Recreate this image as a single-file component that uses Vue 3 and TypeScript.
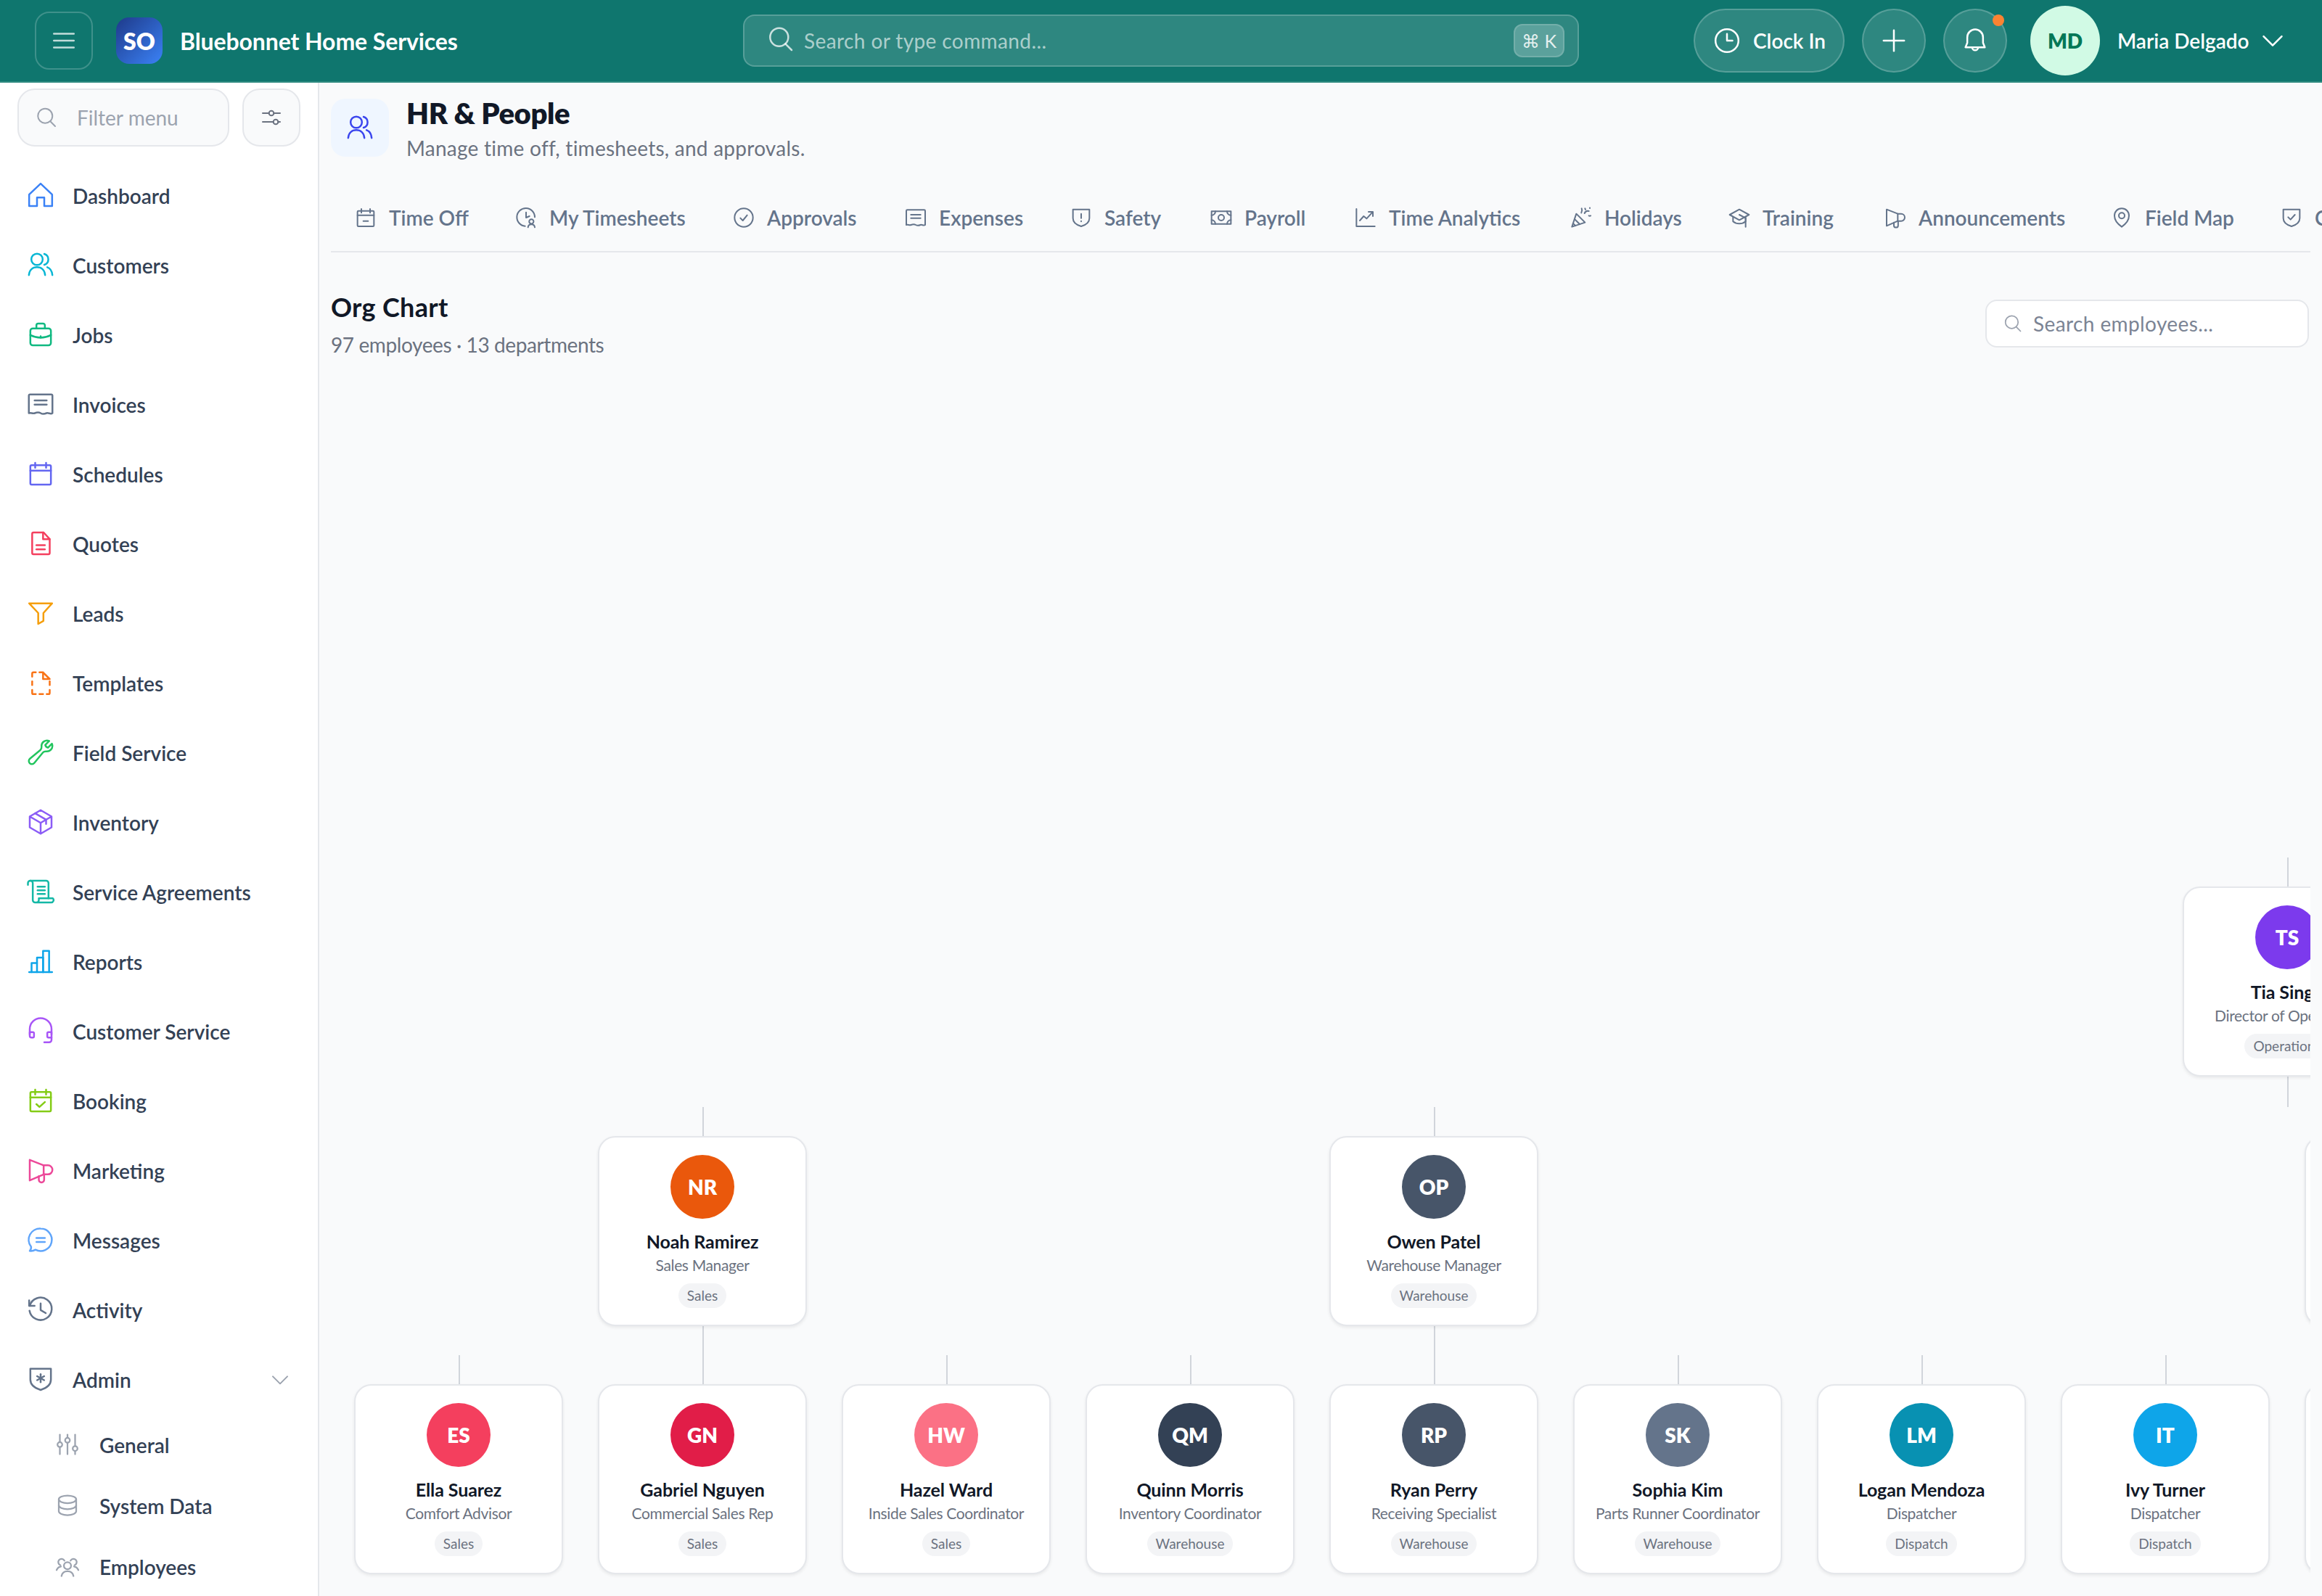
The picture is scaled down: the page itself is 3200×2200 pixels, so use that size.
<script setup lang="ts">
const c = (x: number, y: number, r: number): string =>
  `M${x - r} ${y}a${r} ${r} 0 1 0 ${2 * r} 0a${r} ${r} 0 1 0 ${-2 * r} 0z`

const calBase = ['M3.5 6a1 1 0 0 1 1-1h15a1 1 0 0 1 1 1v14a1 1 0 0 1-1 1h-15a1 1 0 0 1-1-1z', 'M3.5 9.5h17', 'M7.5 3v4', 'M16.5 3v4']
const shieldBase = 'M3.5 3.5h17v9c0 4.3-3.6 7-8.5 8.5-4.9-1.5-8.5-4.2-8.5-8.5z'
const mega = ['M3 3.5 14.5 8H18a3.7 3.7 0 0 1 0 7.5h-3.5L3 20.5z', 'M14.5 8v7.5', 'M10.5 17v3a2.2 2.2 0 0 0 4.4 0v-4.5']

const icons: Record<string, string[]> = {
  menu: ['M3.75 6.25h16.5', 'M3.75 12h16.5', 'M3.75 17.75h16.5'],
  search: ['m21 21-5.2-5.2', 'M15.8 15.8A7.5 7.5 0 1 0 5.2 5.2a7.5 7.5 0 0 0 10.6 10.6z'],
  sliders: ['M3 7.5h6.5', 'M14.5 7.5H21', c(12, 7.5, 2.5), 'M3 16.5h11', 'M19 16.5h2', c(16.5, 16.5, 2.5)],
  home: ['M2.5 11.5 12 2.5l9.5 9v9.5h-6.5v-7H9v7H2.500z'],
  users: [c(9, 7.5, 4.7), 'M2.3 20.5c.4-4.200 3-6.500 6.700-6.500s6.300 2.300 6.700 6.500', 'M15 3a4.700 4.700 0 0 1 0 9', 'M17.500 14c2.500.9 3.900 3.200 4.200 6.500'],
  briefcase: ['M3.500 9a2 2 0 0 1 2-2h13a2 2 0 0 1 2 2v10a2 2 0 0 1-2 2h-13a2 2 0 0 1-2-2z', 'M8.500 7V4.500A1.500 1.500 0 0 1 10 3h4a1.500 1.500 0 0 1 1.500 1.500V7', 'M3.500 12.500c5.300 2.700 11.700 2.700 17 0', 'M12 13.500v1'],
  receipt: ['M2.250 5a1 1 0 0 1 1-1h17.500a1 1 0 0 1 1 1v14.500c-1.600 1.300-3.300-.7-4.900 0s-3.200 1-4.850 0-3.200-.7-4.850 0-3.300-.7-4.900 0z', 'M7 9h10', 'M7 12.500h10'],
  calendar: calBase,
  doc: ['M5 4a1 1 0 0 1 1-1h8.500l5 5.500V20a1 1 0 0 1-1 1H6a1 1 0 0 1-1-1z', 'M14 3v5.500h5.500', 'M8.500 13.500h7', 'M8.500 17h7'],
  funnel: ['M2.500 4h19l-7.200 8v6.500L10 21v-9z'],
  dashdoc: ['M5 7V4.500a1 1 0 0 1 1-1h2', 'M5 11v3', 'M5 18v2.500a1 1 0 0 0 1 1h2', 'M11 21.500h3', 'M17 21.500h1.500a1 1 0 0 0 1-1V18', 'M19.500 14v-3', 'M11 3.500h3l5.500 5.500h-5.500V3.500'],
  wrench: ['M21.750 6.750a4.500 4.500 0 0 1-4.884 4.484c-1.076-.091-2.264.071-2.950.904l-7.152 8.684a2.548 2.548 0 1 1-3.586-3.586l8.684-7.152c.833-.686.995-1.874.904-2.950a4.500 4.500 0 0 1 6.336-4.486l-3.276 3.276a3.004 3.004 0 0 0 2.250 2.250l3.276-3.276c.256.565.398 1.192.398 1.852z'],
  cube: ['m21 7.500-9-5.250L3 7.500m18 0-9 5.250m9-5.250v9l-9 5.250M3 7.500l9 5.250M3 7.500v9l9 5.250m0-9v9', 'M7.500 4.900l9 5.250v3.500'],
  scroll: ['M1.500 6.500V5a2 2 0 0 1 2-2h13a2 2 0 0 1 2 2v12.500', 'M3.500 3a2 2 0 0 1 2 2v14a2 2 0 0 0 2 2h13a2 2 0 0 0 1.500-3.500H10.500V19a2 2 0 0 1-2 2', 'M9.500 8h6', 'M9.500 11h6', 'M9.500 14h6'],
  bars: ['M2.500 21h19', 'M4.500 21v-7.500H9', 'M9 21V9h5v12', 'M14 21V3.500h5V21'],
  headset: ['M3 15v-4.500a9 9 0 0 1 18 0V15', 'M3 13h2.500a1 1 0 0 1 1 1v2.500a1 1 0 0 1-1 1H4.500A1.500 1.500 0 0 1 3 16z', 'M21 13h-2.500a1 1 0 0 0-1 1v2.500a1 1 0 0 0 1 1H21z', 'M21 17.500v2a2 2 0 0 1-2 2h-4'],
  calcheck: [...calBase, 'M8.500 15l2.500 2.300 4.500-4'],
  mega,
  chat: ['M12 2.750a9.250 9.250 0 1 1-4.300 17.450c-1.300.800-2.900 1.200-4.700 1 .9-1 1.300-2.300 1.100-3.500A9.250 9.250 0 0 1 12 2.750z', 'M8.500 10.500h7', 'M8.500 13.800h7'],
  history: ['M2.500 4.500v4.500h4.500', 'M3 9a9.250 9.250 0 1 1-.2 4', 'M12 7v5.500l4.200 2.500'],
  shieldstar: [shieldBase, 'M12 8v6.500', 'M9.100 9.600l5.800 3.300', 'M14.900 9.600l-5.800 3.300'],
  tune: ['M5 3v7', 'M5 14.500V21', c(5, 12.200, 2.200), 'M12 3v3', 'M12 10.500V21', c(12, 8.200, 2.200), 'M19 3v10.500', 'M19 18v3', c(19, 15.800, 2.200)],
  database: ['M12 3c4.400 0 8 1.600 8 3.500S16.400 10 12 10 4 8.400 4 6.500 7.600 3 12 3z', 'M4 6.500v11c0 1.900 3.600 3.500 8 3.500s8-1.600 8-3.500v-11', 'M4 12c0 1.900 3.600 3.500 8 3.500s8-1.600 8-3.500'],
  users3: [c(12, 11.500, 3.300), 'M6.500 21c.5-2.900 2.700-4.500 5.500-4.500s5 1.600 5.500 4.500', 'M9.200 6.800a3 3 0 1 0-3.700 4.200', 'M14.800 6.800a3 3 0 1 1 3.700 4.200', 'M2 15.500c.9-1.900 2.200-3 4-3.200', 'M22 15.500c-.9-1.900-2.200-3-4-3.200'],
  chevron: ['M4.500 8.500 12 16l7.500-7.500'],
  plus: ['M12 3.500v17', 'M3.500 12h17'],
  bell: ['M12 2.750a6.500 6.500 0 0 0-6.500 6.500v4.500L4 17.500h16l-1.500-3.750V9.250A6.500 6.500 0 0 0 12 2.750z', 'M9.500 17.500a2.500 2.500 0 0 0 5 0'],
  clock: [c(12, 12, 9.500), 'M12 6.500V12h4.500'],
  calminus: [...calBase, 'M9.500 15.500h5'],
  clockuser: ['M21 11.500a9.250 9.250 0 1 0-10 9.250', 'M12 6.500V12l3.500-1.500', c(17.500, 16, 2.300), 'M14 22c.2-1.700 1.500-3 3.500-3s3.300 1.300 3.500 3'],
  check: [c(12, 12, 9.500), 'M8.500 12.500l2.500 2.500 4.500-5.500'],
  shieldex: [shieldBase, 'M12 8v4.500', 'M12 15.500v.5'],
  cash: ['M2 5.500h20v13H2z', c(12, 12, 3), 'M2 9.500A4 4 0 0 0 6 5.500', 'M22 9.500a4 4 0 0 1-4-4', 'M2 14.500a4 4 0 0 1 4 4', 'M22 14.500a4 4 0 0 0-4 4'],
  chart: ['M2.500 3v18h19', 'M6 15l4-4.500 3 2.500 6-6.500', 'M15 6h4.500v4.500'],
  party: ['M2.500 21.500 7 8l9 9z', 'M5.200 13.500l5.300 5.300', 'M3.700 18l2.300 2.300', 'M12.500 2.500c.7 1.500.6 3-.3 4.500', 'M15.500 7.500c.8-1.800 2.500-2.700 4.500-2.200', 'M16 2.500l.5 1.200', 'M20 10c.6.300 1.200.300 1.800 0', 'M21 1.800v.4'],
  cap: ['M12 3.500 22 9l-10 5.500L2 9z', 'M5.500 11.500V16c3.500 3 9.500 3 13 0v-4.500', 'M12 9l6.500 3.500v9'],
  pin: ['M12 2.500c4.400 0 7.500 3.200 7.500 7.500 0 4.700-3.400 8.700-7.500 11.500C7.900 18.700 4.500 14.700 4.500 10c0-4.300 3.100-7.500 7.500-7.500z', c(12, 10, 3)],
  shieldcheck: [shieldBase, 'M8.500 11.500l2.500 2.500 4.500-5'],
}

const nav = [
  { label: 'Dashboard', icon: 'home', color: '#3b82f6' },
  { label: 'Customers', icon: 'users', color: '#06b6d4' },
  { label: 'Jobs', icon: 'briefcase', color: '#10b981' },
  { label: 'Invoices', icon: 'receipt', color: '#64748b' },
  { label: 'Schedules', icon: 'calendar', color: '#6366f1' },
  { label: 'Quotes', icon: 'doc', color: '#f43f5e' },
  { label: 'Leads', icon: 'funnel', color: '#f59e0b' },
  { label: 'Templates', icon: 'dashdoc', color: '#f97316' },
  { label: 'Field Service', icon: 'wrench', color: '#22c55e' },
  { label: 'Inventory', icon: 'cube', color: '#8b5cf6' },
  { label: 'Service Agreements', icon: 'scroll', color: '#14b8a6' },
  { label: 'Reports', icon: 'bars', color: '#0ea5e9' },
  { label: 'Customer Service', icon: 'headset', color: '#a855f7' },
  { label: 'Booking', icon: 'calcheck', color: '#84cc16' },
  { label: 'Marketing', icon: 'mega', color: '#ec4899' },
  { label: 'Messages', icon: 'chat', color: '#60a5fa' },
  { label: 'Activity', icon: 'history', color: '#64748b' },
  { label: 'Admin', icon: 'shieldstar', color: '#64748b' },
]
const subNav = [
  { label: 'General', icon: 'tune' },
  { label: 'System Data', icon: 'database' },
  { label: 'Employees', icon: 'users3' },
]
const tabs = [
  { label: 'Time Off', icon: 'calminus', w: 109 },
  { label: 'My Timesheets', icon: 'clockuser', w: 188 },
  { label: 'Approvals', icon: 'check', w: 125 },
  { label: 'Expenses', icon: 'receipt', w: 116 },
  { label: 'Safety', icon: 'shieldex', w: 81 },
  { label: 'Payroll', icon: 'cash', w: 87 },
  { label: 'Time Analytics', icon: 'chart', w: 185 },
  { label: 'Holidays', icon: 'party', w: 106 },
  { label: 'Training', icon: 'cap', w: 103 },
  { label: 'Announcements', icon: 'mega', w: 200 },
  { label: 'Field Map', icon: 'pin', w: 122 },
  { label: 'Compliance', icon: 'shieldcheck', w: 140 },
]

/* Chart coordinates are relative to the canvas origin (x 456, y 489 on the page). */
const OX = 456
const OY = 489
const R1 = 1222 - OY
const R2 = 1566 - OY
const R3 = 1908 - OY
const col = (i: number): number => 488 - OX + i * 336

const people = [
  { x: 3008 - OX, y: R1, ini: 'TS', name: 'Tia Singh', role: 'Director of Operations', dept: 'Operations', bg: '#7c3aed' },
  { x: col(1), y: R2, ini: 'NR', name: 'Noah Ramirez', role: 'Sales Manager', dept: 'Sales', bg: '#ea580c' },
  { x: col(4), y: R2, ini: 'OP', name: 'Owen Patel', role: 'Warehouse Manager', dept: 'Warehouse', bg: '#475569' },
  { x: col(0), y: R3, ini: 'ES', name: 'Ella Suarez', role: 'Comfort Advisor', dept: 'Sales', bg: '#f43f5e' },
  { x: col(1), y: R3, ini: 'GN', name: 'Gabriel Nguyen', role: 'Commercial Sales Rep', dept: 'Sales', bg: '#e11d48' },
  { x: col(2), y: R3, ini: 'HW', name: 'Hazel Ward', role: 'Inside Sales Coordinator', dept: 'Sales', bg: '#fb7185' },
  { x: col(3), y: R3, ini: 'QM', name: 'Quinn Morris', role: 'Inventory Coordinator', dept: 'Warehouse', bg: '#334155' },
  { x: col(4), y: R3, ini: 'RP', name: 'Ryan Perry', role: 'Receiving Specialist', dept: 'Warehouse', bg: '#475569' },
  { x: col(5), y: R3, ini: 'SK', name: 'Sophia Kim', role: 'Parts Runner Coordinator', dept: 'Warehouse', bg: '#64748b' },
  { x: col(6), y: R3, ini: 'LM', name: 'Logan Mendoza', role: 'Dispatcher', dept: 'Dispatch', bg: '#0891b2' },
  { x: col(7), y: R3, ini: 'IT', name: 'Ivy Turner', role: 'Dispatcher', dept: 'Dispatch', bg: '#0ea5e9' },
]
const blanks = [
  { x: col(8), y: R2 },
  { x: col(8), y: R3 },
]
const lines = [
  { x: 3152 - OX, y: 1182 - OY, h: 42 },
  { x: 3152 - OX, y: 1484 - OY, h: 42 },
  { x: col(1) + 144, y: 1526 - OY, h: 40 },
  { x: col(4) + 144, y: 1526 - OY, h: 40 },
  { x: col(1) + 144, y: 1828 - OY, h: 80 },
  { x: col(4) + 144, y: 1828 - OY, h: 80 },
  ...[0, 2, 3, 5, 6, 7].map((i) => ({ x: col(i) + 144, y: 1868 - OY, h: 40 })),
]
</script>

<template>
  <div class="app">
    <header class="topbar">
      <button class="menu-btn">
        <svg class="ic ic-40" viewBox="0 0 24 24"><path v-for="d in icons.menu" :key="d" :d="d" /></svg>
      </button>
      <div class="logo">SO</div>
      <div class="brand">Bluebonnet Home Services</div>
      <div class="cmd">
        <svg class="ic ic-40 cmd-ic" viewBox="0 0 24 24"><path v-for="d in icons.search" :key="d" :d="d" /></svg>
        <span class="cmd-text">Search or type command...</span>
        <span class="kbd">⌘ K</span>
      </div>
      <div class="top-right">
        <button class="clock-btn">
          <svg class="ic ic-40" viewBox="0 0 24 24"><path v-for="d in icons.clock" :key="d" :d="d" /></svg>
          <span>Clock In</span>
        </button>
        <button class="round-btn">
          <svg class="ic ic-40" viewBox="0 0 24 24"><path v-for="d in icons.plus" :key="d" :d="d" /></svg>
        </button>
        <button class="round-btn bell">
          <svg class="ic ic-40" viewBox="0 0 24 24"><path v-for="d in icons.bell" :key="d" :d="d" /></svg>
          <span class="dot"></span>
        </button>
        <div class="avatar-me">MD</div>
        <span class="me-name">Maria Delgado</span>
        <svg class="ic ic-40 me-chev" viewBox="0 0 24 24"><path v-for="d in icons.chevron" :key="d" :d="d" /></svg>
      </div>
    </header>

    <div class="body">
      <aside class="sidebar">
        <div class="filter-row">
          <div class="filter">
            <svg class="ic ic-32" viewBox="0 0 24 24"><path v-for="d in icons.search" :key="d" :d="d" /></svg>
            <span>Filter menu</span>
          </div>
          <button class="filter-btn">
            <svg class="ic ic-32" viewBox="0 0 24 24"><path v-for="d in icons.sliders" :key="d" :d="d" /></svg>
          </button>
        </div>
        <nav class="nav">
          <div v-for="n in nav" :key="n.label" class="nav-row">
            <svg class="ic ic-40 nudge" :style="{ color: n.color }" viewBox="0 0 24 24"><path v-for="d in icons[n.icon]" :key="d" :d="d" /></svg>
            <span class="nav-label">{{ n.label }}</span>
            <svg v-if="n.label === 'Admin'" class="ic ic-32 nav-chev" viewBox="0 0 24 24"><path v-for="d in icons.chevron" :key="d" :d="d" /></svg>
          </div>
          <div v-for="n in subNav" :key="n.label" class="sub-row">
            <svg class="ic ic-36 nudge" viewBox="0 0 24 24"><path v-for="d in icons[n.icon]" :key="d" :d="d" /></svg>
            <span class="nav-label">{{ n.label }}</span>
          </div>
        </nav>
      </aside>

      <main class="main">
        <div class="page-head">
          <div class="page-icon">
            <svg class="ic ic-40" viewBox="0 0 24 24"><path v-for="d in icons.users" :key="d" :d="d" /></svg>
          </div>
          <div>
            <h1 class="page-title">HR &amp; People</h1>
            <p class="page-sub">Manage time off, timesheets, and approvals.</p>
          </div>
        </div>

        <div class="tabs">
          <div v-for="t in tabs" :key="t.label" class="tab">
            <svg class="ic ic-32" viewBox="0 0 24 24"><path v-for="d in icons[t.icon]" :key="d" :d="d" /></svg>
            <span class="tab-label" :style="{ width: t.w + 'px' }">{{ t.label }}</span>
          </div>
        </div>

        <div class="org-head">
          <div>
            <h2 class="org-title">Org Chart</h2>
            <p class="org-sub">97 employees · 13 departments</p>
          </div>
          <div class="emp-search">
            <svg class="ic ic-28" viewBox="0 0 24 24"><path v-for="d in icons.search" :key="d" :d="d" /></svg>
            <span>Search employees...</span>
          </div>
        </div>

        <div class="canvas">
          <div v-for="(l, i) in lines" :key="i" class="link" :style="{ left: l.x + 'px', top: l.y + 'px', height: l.h + 'px' }"></div>
          <div v-for="(b, i) in blanks" :key="'b' + i" class="card" :style="{ left: b.x + 'px', top: b.y + 'px' }"></div>
          <div v-for="p in people" :key="p.ini" class="card" :style="{ left: p.x + 'px', top: p.y + 'px' }">
            <div class="avatar" :style="{ background: p.bg }">{{ p.ini }}</div>
            <div class="name">{{ p.name }}</div>
            <div class="role">{{ p.role }}</div>
            <div class="pill">{{ p.dept }}</div>
          </div>
        </div>
      </main>
    </div>
  </div>
</template>

<style>
html, body { margin: 0; padding: 0; }
</style>

<style scoped>
.app {
  width: 3200px;
  height: 2200px;
  overflow: hidden;
  display: flex;
  flex-direction: column;
  font-family: "Lato", "Noto Sans", sans-serif;
  background: #f9fafb;
  color: #111827;
}
button { font-family: inherit; padding: 0; cursor: pointer; }
h1, h2, p { margin: 0; }

.ic {
  flex: none;
  fill: none;
  stroke: currentColor;
  stroke-width: 1.5;
  stroke-linecap: round;
  stroke-linejoin: round;
}
.ic-28 { width: 28px; height: 28px; }
.ic-32 { width: 32px; height: 32px; }
.ic-36 { width: 36px; height: 36px; }
.ic-40 { width: 40px; height: 40px; }
.nudge { margin-top: -3px; }

/* top bar */
.topbar {
  flex: none;
  height: 114px;
  box-sizing: border-box;
  border-bottom: 2px solid #2f8a80;
  background: #0f766e;
  color: #fff;
  display: flex;
  align-items: center;
  padding: 0 48px;
}
.menu-btn {
  width: 80px;
  height: 80px;
  box-sizing: border-box;
  border: 2px solid rgba(255, 255, 255, 0.2);
  border-radius: 20px;
  background: transparent;
  color: rgba(255, 255, 255, 0.75);
  display: flex;
  align-items: center;
  justify-content: center;
}
.logo {
  width: 64px;
  height: 64px;
  margin-left: 32px;
  border-radius: 18px;
  background: linear-gradient(135deg, #1e3a8a, #3b82f6);
  display: flex;
  align-items: center;
  justify-content: center;
  font-size: 32px;
  font-weight: 800;
}
.brand {
  width: 776px;
  margin-left: 24px;
  font-size: 32px;
  font-weight: 700;
  letter-spacing: -0.1px;
  white-space: nowrap;
}
.cmd {
  width: 1152px;
  height: 72px;
  box-sizing: border-box;
  border: 2px solid rgba(255, 255, 255, 0.2);
  border-radius: 16px;
  background: rgba(255, 255, 255, 0.13);
  display: flex;
  align-items: center;
  padding: 0 18px 0 30px;
  color: rgba(255, 255, 255, 0.62);
}
.cmd-ic { margin-top: -4px; color: rgba(255, 255, 255, 0.75); }
.cmd-text { margin-left: 12px; font-size: 28px; flex: 1; letter-spacing: 0.4px; }
.kbd {
  width: 70px;
  height: 46px;
  box-sizing: border-box;
  border: 2px solid rgba(255, 255, 255, 0.15);
  border-radius: 12px;
  background: rgba(255, 255, 255, 0.22);
  font-size: 25px;
  display: flex;
  align-items: center;
  justify-content: center;
  color: rgba(255, 255, 255, 0.85);
}
.top-right { margin-left: auto; display: flex; align-items: center; }
.clock-btn {
  width: 208px;
  height: 88px;
  box-sizing: border-box;
  border: 2px solid rgba(255, 255, 255, 0.2);
  border-radius: 44px;
  background: rgba(255, 255, 255, 0.13);
  color: #fff;
  display: flex;
  align-items: center;
  gap: 16px;
  padding-left: 24px;
  font-size: 28px;
  font-weight: 600;
}
.round-btn {
  position: relative;
  width: 88px;
  height: 88px;
  margin-left: 24px;
  box-sizing: border-box;
  border: 2px solid rgba(255, 255, 255, 0.2);
  border-radius: 50%;
  background: rgba(255, 255, 255, 0.13);
  color: #fff;
  display: flex;
  align-items: center;
  justify-content: center;
}
.dot {
  position: absolute;
  top: 6px;
  right: 2px;
  width: 16px;
  height: 16px;
  border-radius: 50%;
  background: #fb8332;
}
.avatar-me {
  width: 96px;
  height: 96px;
  margin-left: 32px;
  border-radius: 50%;
  background: #d1fae5;
  color: #047857;
  display: flex;
  align-items: center;
  justify-content: center;
  font-size: 28px;
  font-weight: 800;
}
.me-name {
  width: 186px;
  margin-left: 24px;
  font-size: 28px;
  font-weight: 600;
  white-space: nowrap;
}
.me-chev { margin-left: 8px; }

/* body */
.body { flex: 1; min-height: 0; display: flex; }
.sidebar {
  flex: none;
  width: 440px;
  box-sizing: border-box;
  border-right: 2px solid #e5e7eb;
  background: #fff;
  overflow: hidden;
}
.filter-row { display: flex; gap: 18px; padding: 8px 24px 0; }
.filter {
  width: 293px;
  height: 80px;
  box-sizing: border-box;
  border: 2px solid #e5e7eb;
  border-radius: 24px;
  background: #f9fafb;
  color: #9ca3af;
  display: flex;
  align-items: center;
  gap: 26px;
  padding-left: 22px;
  font-size: 28px;
}
.filter-btn {
  width: 80px;
  height: 80px;
  box-sizing: border-box;
  border: 2px solid #e5e7eb;
  border-radius: 24px;
  background: #f9fafb;
  color: #6b7280;
  display: flex;
  align-items: center;
  justify-content: center;
}
.nav { margin-top: 20px; }
.nav-row {
  height: 96px;
  display: flex;
  align-items: center;
  gap: 24px;
  padding-left: 36px;
}
.sub-row {
  height: 84px;
  display: flex;
  align-items: center;
  gap: 26px;
  padding-left: 75px;
  color: #9ca3af;
}
.nav-label { font-size: 28px; font-weight: 600; color: #334155; white-space: nowrap; }
.nav-chev { margin-left: auto; margin-right: 36px; color: #9ca3af; }

/* main */
.main {
  flex: 1;
  min-width: 0;
  display: flex;
  flex-direction: column;
  padding: 22px 16px 0;
}
.page-head { flex: none; display: flex; gap: 24px; height: 80px; }
.page-icon {
  width: 80px;
  height: 80px;
  border-radius: 20px;
  background: #eff6ff;
  color: #3a45ee;
  display: flex;
  align-items: center;
  justify-content: center;
}
.page-title { font-size: 40px; line-height: 40px; font-weight: 800; letter-spacing: -0.4px; color: #111827; }
.page-sub { font-size: 28px; line-height: 36px; margin-top: 10px; letter-spacing: 0.25px; color: #6b7280; }
.tabs {
  flex: none;
  margin-top: 38px;
  height: 94px;
  box-sizing: border-box;
  border-bottom: 2px solid #e5e7eb;
  display: flex;
}
.tab {
  flex: none;
  display: flex;
  align-items: center;
  gap: 16px;
  padding: 0 32px;
  color: #64748b;
}
.tab-label { font-size: 28px; font-weight: 600; white-space: nowrap; }
.org-head {
  flex: none;
  height: 88px;
  margin-top: 53px;
  display: flex;
  justify-content: space-between;
}
.org-title { font-size: 36px; line-height: 44px; font-weight: 700; letter-spacing: 0.3px; color: #111827; }
.org-sub { font-size: 28px; line-height: 40px; margin-top: 10px; letter-spacing: -0.4px; color: #6b7280; }
.emp-search {
  width: 446px;
  height: 66px;
  margin-top: 12px;
  margin-right: 2px;
  box-sizing: border-box;
  border: 2px solid #e5e7eb;
  border-radius: 16px;
  background: #fff;
  color: #9ca3af;
  display: flex;
  align-items: center;
  gap: 14px;
  padding-left: 22px;
  font-size: 28px;
}
.emp-search span { color: #7b8494; letter-spacing: 0.4px; }

.canvas { position: relative; flex: 1; min-height: 0; overflow: hidden; }
.link { position: absolute; width: 2px; background: #d1d5db; }
.card {
  position: absolute;
  width: 288px;
  height: 262px;
  box-sizing: border-box;
  border: 2px solid #e5e7eb;
  border-radius: 24px;
  background: #fff;
  box-shadow: 0 2px 4px rgba(0, 0, 0, 0.07);
  padding-top: 24px;
  display: flex;
  flex-direction: column;
  align-items: center;
}
.avatar {
  width: 88px;
  height: 88px;
  flex: none;
  border-radius: 50%;
  color: #fff;
  display: flex;
  align-items: center;
  justify-content: center;
  font-size: 28px;
  font-weight: 800;
}
.name { margin-top: 13px; font-size: 25px; line-height: 36px; font-weight: 700; letter-spacing: -0.1px; color: #111827; white-space: nowrap; }
.role { font-size: 21px; line-height: 30px; letter-spacing: -0.35px; color: #6b7280; white-space: nowrap; }
.pill {
  margin-top: 10px;
  height: 34px;
  padding: 0 12px;
  border-radius: 17px;
  background: #f3f4f6;
  color: #6b7280;
  font-size: 19px;
  line-height: 34px;
  white-space: nowrap;
}
</style>
